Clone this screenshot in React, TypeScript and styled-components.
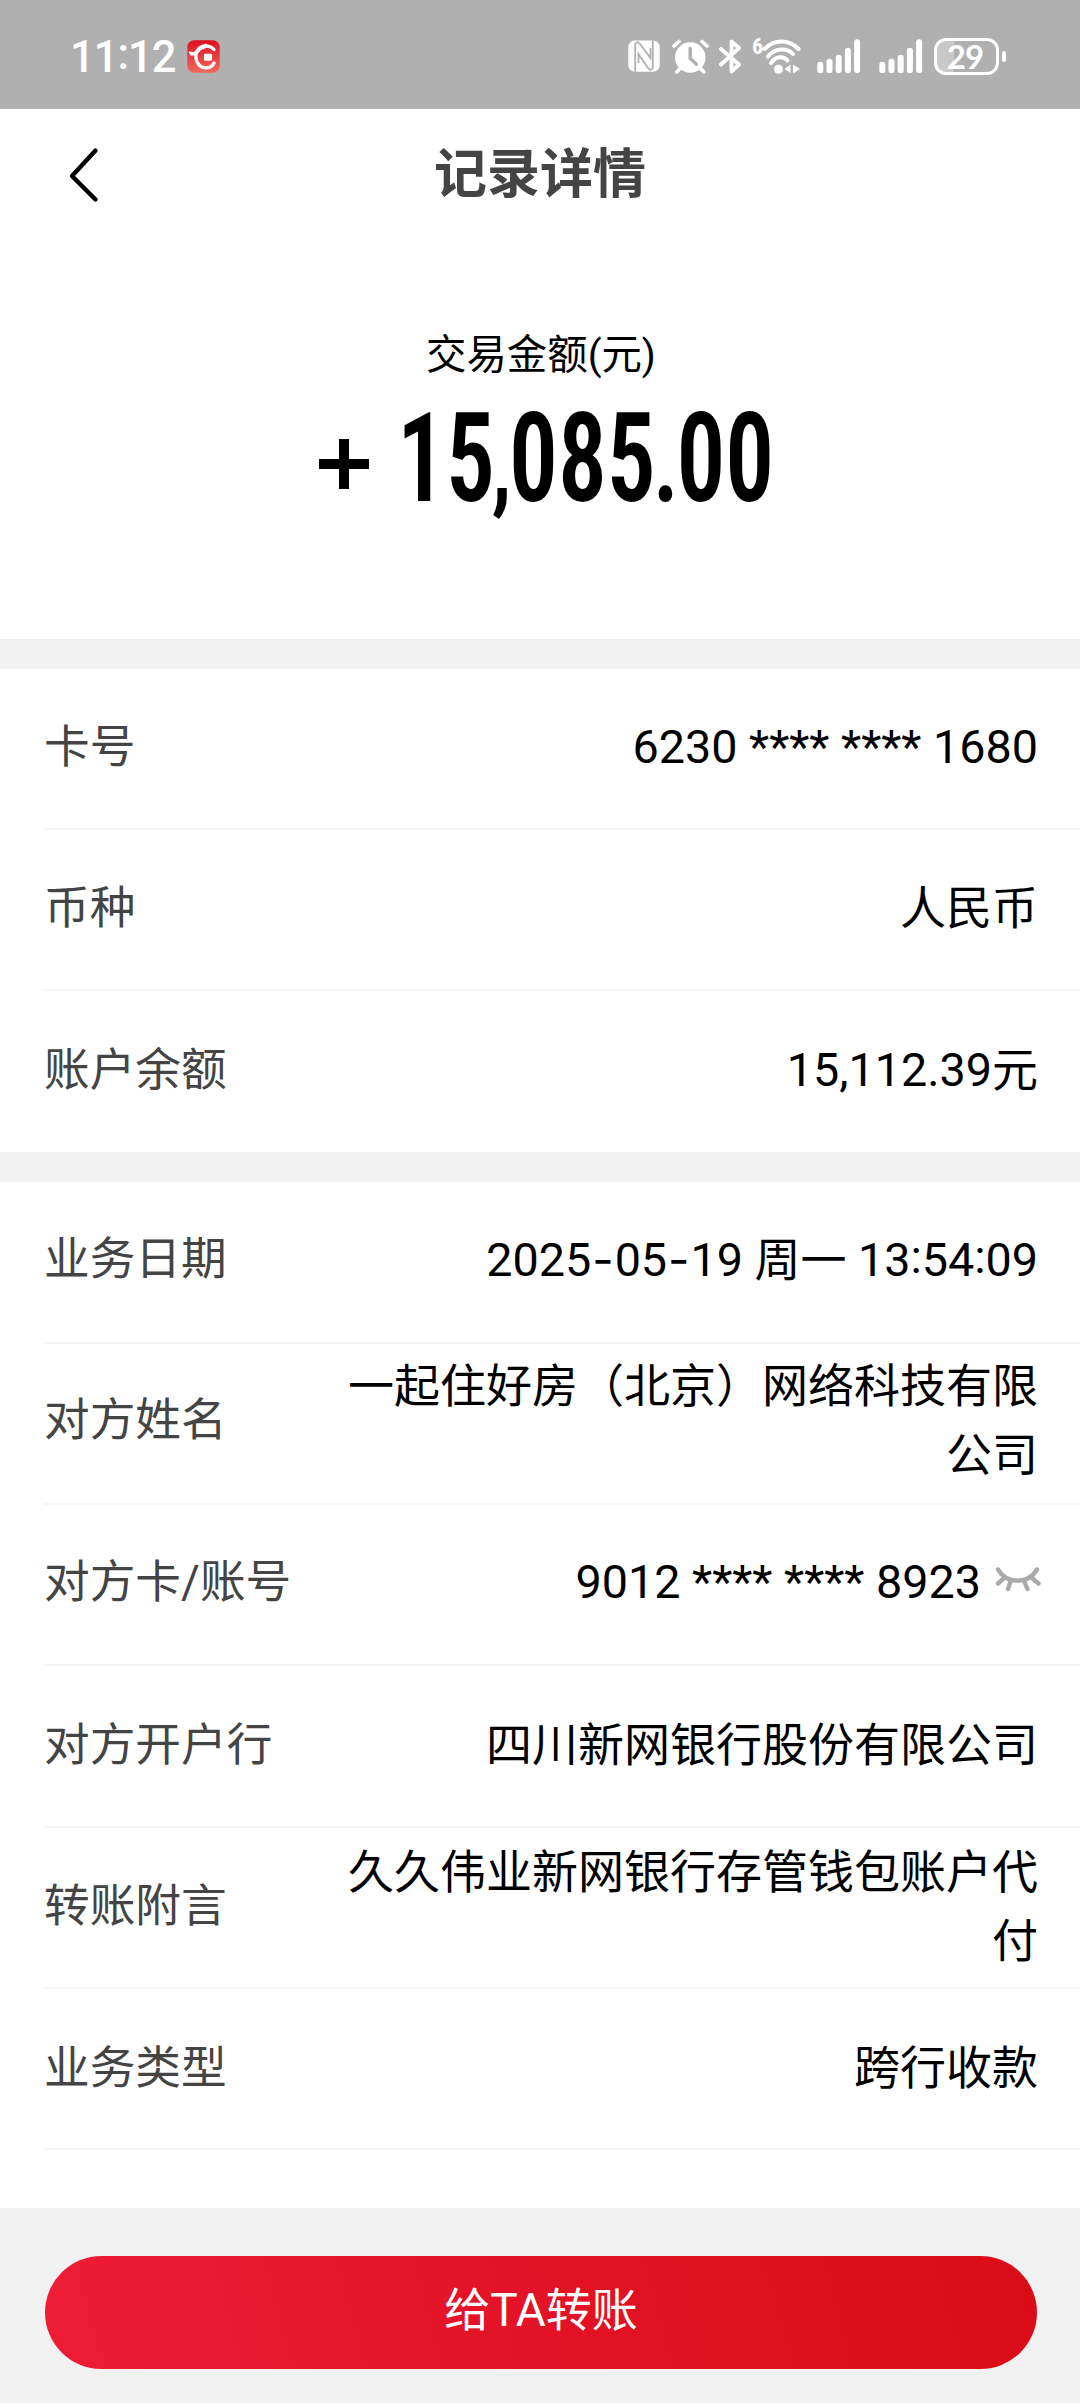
import React from 'react';
import styled, { createGlobalStyle } from 'styled-components';

const Global = createGlobalStyle`
  * { box-sizing: border-box; }
  body { margin: 0; background: #fff; }
`;

const Screen = styled.div`
  width: 1080px;
  height: 2403px;
  display: flex;
  flex-direction: column;
  overflow: hidden;
  background: #fff;
  color: #000;
  font-family: Roboto, 'Noto Sans CJK SC', sans-serif;
  font-size: 46px;
`;

const StatusBar = styled.header`
  height: 109px;
  flex: none;
  display: flex;
  align-items: center;
  padding: 3px 74px 0 70px;
  background: #b0b0b0;
  color: #fff;

  svg {
    display: block;
    flex: none;
  }
`;

const Clock = styled.div`
  width: 117px;
  padding-top: 3px;
  font-size: 43.5px;
  font-weight: 500;
  line-height: 50px;
  letter-spacing: -1px;
  white-space: nowrap;
`;

const Raised = styled.span<{ $by: number }>`
  position: relative;
  top: -${p => p.$by}px;
`;

const StatusIcons = styled.div`
  margin-left: auto;
  display: flex;
  align-items: center;
`;

const Gap = styled.span<{ $w: number }>`
  width: ${p => p.$w}px;
  flex: none;
`;

const Battery = styled.div`
  width: 65px;
  height: 37px;
  border: 3px solid #fff;
  border-radius: 12px;
  background: linear-gradient(90deg, #c8c8c8 0 29%, transparent 29%);
  display: flex;
  align-items: center;
  justify-content: center;
  padding-right: 3px;
  font: 700 33px/32px Lato, Roboto, sans-serif;
  letter-spacing: -1px;
`;

const BatteryNub = styled.div`
  width: 4px;
  height: 11px;
  margin-left: 3px;
  border-radius: 2px;
  background: #fff;
`;

const NavBar = styled.nav`
  height: 131px;
  flex: none;
  display: grid;
  grid-template-columns: 160px 1fr 160px;
  align-items: center;
`;

const BackButton = styled.button`
  padding: 1px 0 0 66px;
  border: 0;
  background: none;
  display: flex;
`;

const Title = styled.h1`
  margin: 0;
  padding-top: 1px;
  text-align: center;
  font-size: 53px;
  line-height: 80px;
  font-weight: 700;
  color: #444;
`;

const Summary = styled.section`
  height: 399px;
  flex: none;
  padding-top: 86px;
  display: flex;
  flex-direction: column;
  align-items: center;
`;

const SummaryLabel = styled.div`
  padding-left: 2px;
  font-size: 40.4px;
  line-height: 60px;
`;

const Amount = styled.div`
  width: 450px;
  height: 146px;
  display: flex;
  align-items: center;
  justify-content: space-between;
  margin-left: 6px;

  svg {
    margin-top: 10px;
  }
`;

const Digits = styled.div`
  width: 371px;
  font-family: 'Roboto Condensed', Roboto, sans-serif;
  font-weight: 640;
  font-size: 125px;
  line-height: 146px;
  white-space: nowrap;
  transform: scaleX(0.778);
  transform-origin: left center;
`;

const Mark = styled.span<{ $size: number }>`
  font-size: ${p => p.$size}px;
  line-height: 1;
  margin: 0 -3px 0 -4px;
`;

const Group = styled.section`
  flex: none;
  border-top: 30px solid #f1f1f1;
`;

const Row = styled.div<{ $lift: number; $last: boolean }>`
  height: 161.3px;
  margin-left: 43px;
  padding: 0 42px ${p => 1 + p.$lift * 2}px 1px;
  display: flex;
  align-items: center;
  justify-content: space-between;
  border-bottom: 2px solid ${p => (p.$last ? 'transparent' : '#f6f6f6')};
  line-height: 69px;
`;

const RowLabel = styled.div`
  flex: none;
  font-size: 45.7px;
  color: #444;
`;

const RowValue = styled.div`
  max-width: 692px;
  display: flex;
  align-items: center;
  font-size: 46px;
  text-align: right;
`;

const Numeric = styled.span`
  font-size: 46.7px;
`;

const Dash = styled.span`
  margin: 0 1px;
  font-family: Inter, sans-serif;
`;

const Footer = styled.footer`
  flex: 1;
  padding: 48px 43px 0 45px;
  background: #f1f1f1;
`;

const TransferButton = styled.button`
  width: 992px;
  height: 113px;
  border: 0;
  border-radius: 57px;
  padding: 0 0 4px;
  background: linear-gradient(75deg, #ee1c36 0%, #e31226 50%, #d90c16 100%);
  color: #fff;
  font: 400 46px/69px Roboto, 'Noto Sans CJK SC', sans-serif;
`;

const Scroller = styled.main`
  height: 1569px;
  flex: none;
  margin-top: -0.5px;
  margin-bottom: 0.5px;
  overflow: hidden;
`;

const AppBadge = () => (
  <svg width="33" height="33" viewBox="0 0 33 33">
    <defs>
      <linearGradient id="badge" x1="0" y1="0" x2="0" y2="1">
        <stop offset="0" stopColor="#dd1020" />
        <stop offset="1" stopColor="#ee6a5e" />
      </linearGradient>
    </defs>
    <rect x="0.3" y="0.3" width="32.4" height="32.4" rx="7" fill="url(#badge)" />
    <path d="M27 9.5C23 5 16 4.5 12 8.5C7.5 13 8 21 12.5 25.5C17 29.5 24.5 28.5 27 23" fill="none" stroke="#fff" strokeWidth="3.2" strokeLinecap="round" />
    <path d="M1.5 11.5L7 12L13 6.5L19 3.5L22 7L14 10L9 15.5L3.5 15.5Z" fill="#fff" />
    <rect x="17" y="13.8" width="8" height="7" rx="1.2" fill="#fff" />
  </svg>
);

const NfcIcon = () => (
  <svg width="32" height="32" viewBox="0 0 32 32">
    <rect x="0.3" y="0.5" width="31.4" height="31.2" rx="6.5" fill="#fff" />
    <path d="M7.2 32V6C7.2 1.5 9.8 1.2 12 4L22.5 18V8" fill="none" stroke="#b0b0b0" strokeWidth="1.8" />
    <path d="M24.8 0V26C24.8 30.5 22.2 30.8 20 28L10.5 14V23" fill="none" stroke="#b0b0b0" strokeWidth="1.8" />
  </svg>
);

const AlarmIcon = () => (
  <svg width="37" height="35" viewBox="0 0 37 35">
    <circle cx="18.3" cy="18.5" r="15.2" fill="#fff" />
    <path d="M2 7L7 2.5M30 2.5L35 7M8 29.5L4.8 33M28.5 29.5L31.8 33" stroke="#fff" strokeWidth="3.6" strokeLinecap="round" />
    <path d="M18.2 9.5V19.5L24.5 25.3" fill="none" stroke="#b0b0b0" strokeWidth="3.4" strokeLinecap="round" strokeLinejoin="round" />
  </svg>
);

const BluetoothIcon = () => (
  <svg width="23" height="35" viewBox="0 0 23 35">
    <path d="M2 10L20 25.5L12.5 32.5V2.5L20 9L2 25.5" fill="none" stroke="#fff" strokeWidth="3.8" strokeLinecap="round" strokeLinejoin="round" />
  </svg>
);

const SixMark = styled.span`
  width: 10px;
  height: 37px;
  font: 700 22px/18px 'Roboto Condensed', Roboto, sans-serif;
`;

const WifiIcon = () => (
  <svg width="39" height="37" viewBox="0 0 39 37">
    <g fill="none" stroke="#fff" strokeWidth="4" strokeLinecap="round">
      <path d="M2.5 11C12 1 27 1 36.5 11" />
      <path d="M5.8 18.5C13 9.5 25 9.5 31 16" />
      <path d="M9 25C13.5 18 21.5 17.5 25.5 22.5" />
    </g>
    <circle cx="16.5" cy="31.3" r="4.5" fill="#fff" />
    <path d="M28.5 26.5V35L22.5 31Z M31 26.5L38 31L31 35.5Z" fill="#fff" />
  </svg>
);

const barTops = [22.7, 19.7, 15.7, 8.7, 0.3];
const SignalIcon = () => (
  <svg width="44" height="35" viewBox="0 0 44 35">
    {barTops.map((y, i) => (
      <rect key={y} x={0.3 + i * 9.2} y={y} width="6" height={34.3 - y} rx="3" fill="#fff" />
    ))}
  </svg>
);

const BackIcon = () => (
  <svg width="34" height="56" viewBox="0 0 34 56">
    <path d="M29.5 3.5L6 29L29.5 52.5" fill="none" stroke="#000" strokeWidth="4.4" strokeLinecap="round" strokeLinejoin="round" />
  </svg>
);

const PlusIcon = () => (
  <svg width="52" height="52" viewBox="0 0 52 52">
    <path d="M26 1V51M1 26H51" stroke="#000" strokeWidth="10" />
  </svg>
);

const EyeSlot = styled.span`
  display: flex;
  margin: 0 -3px 7px 13px;
`;

const ClosedEyeIcon = () => (
  <svg width="47" height="26" viewBox="0 0 47 26">
    <g fill="none" stroke="#aaa" strokeWidth="4.4" strokeLinecap="round">
      <path d="M4 3.5C13 18.5 34 18.5 43 3.5" />
      <path d="M9 13L4 17.5M16.5 16L14 23M30.5 16L33.5 23M38 12L44.5 17.5" />
    </g>
  </svg>
);

type Item = { label: string; value: React.ReactNode; lift?: number };

const account: Item[] = [
  { label: '卡号', value: <Numeric>6230 **** **** 1680</Numeric> },
  { label: '币种', value: '人民币' },
  { label: '账户余额', value: <span><Numeric>15,112.39</Numeric>元</span> },
];

const record: Item[] = [
  {
    label: '业务日期',
    lift: 2,
    value: (
      <span>
        <Numeric>2025<Dash>-</Dash>05<Dash>-</Dash>19</Numeric> 周一{' '}
        <Numeric>13<Raised $by={3}>:</Raised>54<Raised $by={3}>:</Raised>09</Numeric>
      </span>
    ),
  },
  { label: '对方姓名', lift: 2, value: '一起住好房（北京）网络科技有限公司' },
  {
    label: '对方卡/账号',
    lift: 2,
    value: (
      <>
        <Numeric>9012 **** **** 8923</Numeric>
        <EyeSlot><ClosedEyeIcon /></EyeSlot>
      </>
    ),
  },
  { label: '对方开户行', value: '四川新网银行股份有限公司' },
  { label: '转账附言', value: '久久伟业新网银行存管钱包账户代付' },
  { label: '业务类型', value: '跨行收款' },
];

const Rows = ({ items, closed = false }: { items: Item[]; closed?: boolean }) => (
  <>
    {items.map((item, i) => (
      <Row key={item.label} $lift={item.lift ?? 0} $last={closed && i === items.length - 1}>
        <RowLabel>{item.label}</RowLabel>
        <RowValue>{item.value}</RowValue>
      </Row>
    ))}
  </>
);

export default function App() {
  return (
    <Screen>
      <Global />
      <StatusBar>
        <Clock>11<Raised $by={3}>:</Raised>12</Clock>
        <AppBadge />
        <StatusIcons>
          <NfcIcon />
          <Gap $w={12} />
          <AlarmIcon />
          <Gap $w={10} />
          <BluetoothIcon />
          <Gap $w={10} />
          <SixMark>6</SixMark>
          <WifiIcon />
          <Gap $w={16} />
          <SignalIcon />
          <Gap $w={18} />
          <SignalIcon />
          <Gap $w={11} />
          <Battery>29</Battery>
          <BatteryNub />
        </StatusIcons>
      </StatusBar>
      <NavBar>
        <BackButton aria-label="返回"><BackIcon /></BackButton>
        <Title>记录详情</Title>
      </NavBar>
      <Summary>
        <SummaryLabel>交易金额(元)</SummaryLabel>
        <Amount>
          <PlusIcon />
          <Digits>15<Mark $size={108}>,</Mark>085<Mark $size={118}>.</Mark>00</Digits>
        </Amount>
      </Summary>
      <Scroller>
        <Group><Rows items={account} closed /></Group>
        <Group><Rows items={record} /></Group>
      </Scroller>
      <Footer>
        <TransferButton>给TA转账</TransferButton>
      </Footer>
    </Screen>
  );
}
